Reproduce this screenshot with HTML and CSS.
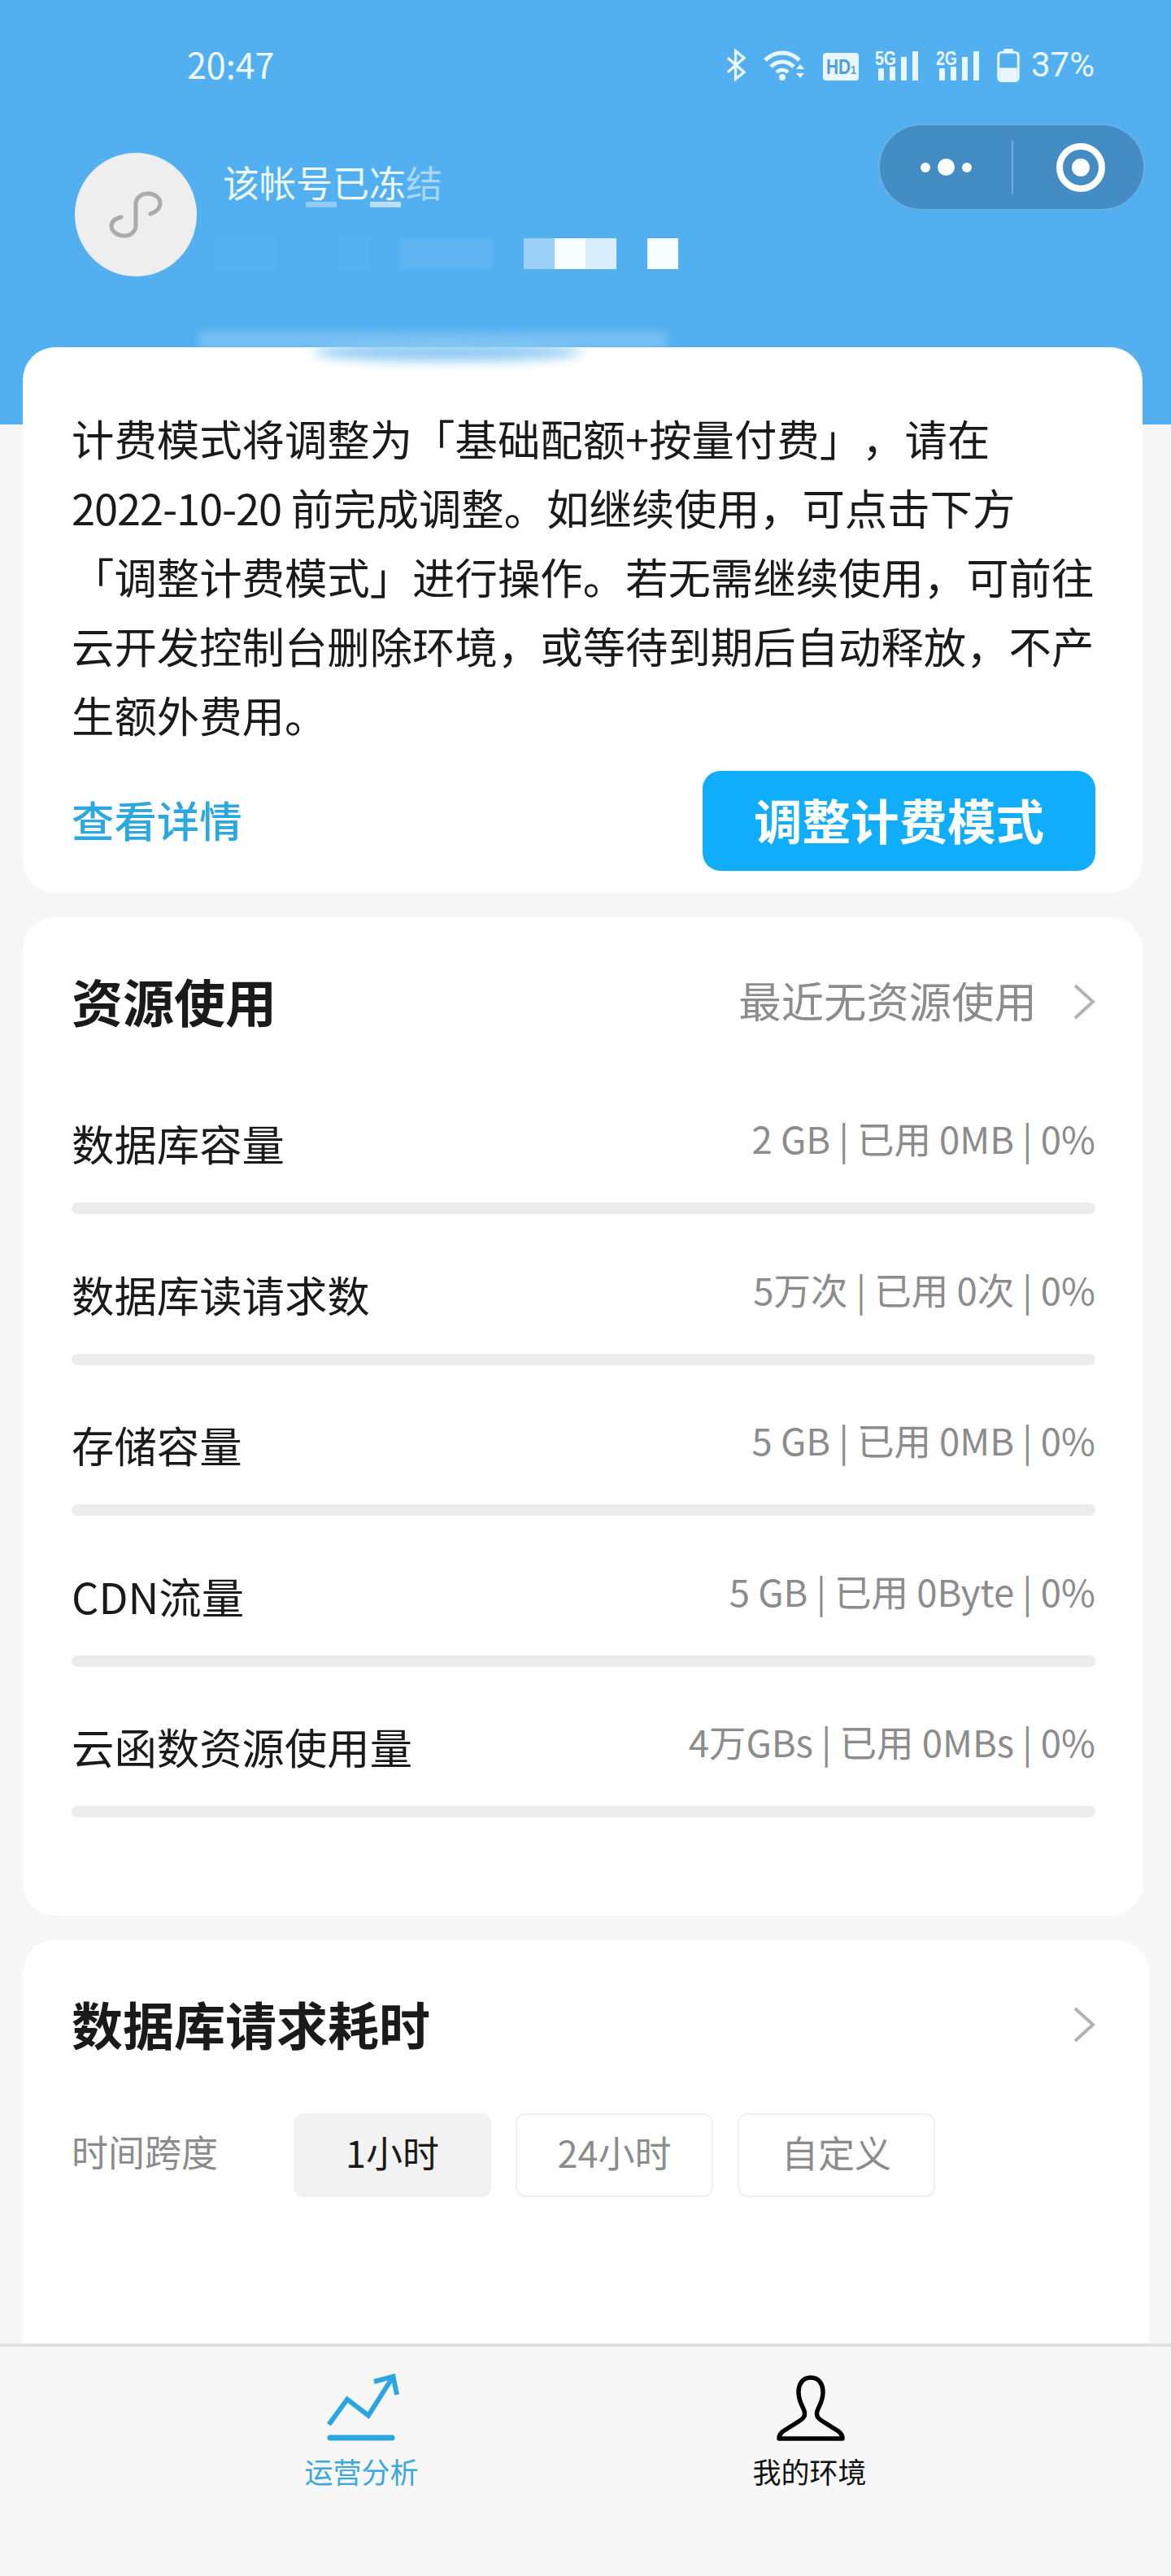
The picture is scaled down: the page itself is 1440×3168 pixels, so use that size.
FILE: index.html
```html
<!DOCTYPE html>
<html lang="zh-CN">
<head>
    <meta charset="UTF-8">
    <meta name="viewport" content="width=device-width, initial-scale=1.0">
    <title>运营分析</title>
    <link rel="stylesheet" href="styles.css">
</head>
<body>
    <div class="page">
        <header class="header">
            <div class="status-bar">
                <span class="status-time">20:47</span>
                <div class="status-icons">
                    <svg class="icon-bt" viewBox="0 0 26 40"><path d="M2 11 L23 29 L12 38 L12 2 L23 11 L2 29" fill="none" stroke="#eaf6fe" stroke-width="3.4"/></svg>
                    <svg class="icon-wifi" viewBox="0 0 54 40">
                        <path d="M3 14 C15 2 33 2 45 14" fill="none" stroke="#eaf6fe" stroke-width="5"/>
                        <path d="M10 22 C18 14 30 14 38 22" fill="none" stroke="#eaf6fe" stroke-width="5"/>
                        <path d="M17 29 C21 25 27 25 31 29" fill="none" stroke="#eaf6fe" stroke-width="4.5"/>
                        <circle cx="24" cy="35" r="4" fill="#eaf6fe"/>
                        <path d="M41 25 L46 19 L51 25 Z M41 30 L51 30 L46 36 Z" fill="#eaf6fe"/>
                    </svg>
                    <svg class="icon-hd" viewBox="0 0 44 34">
                        <rect y="0" width="44" height="34" rx="4" fill="#eaf6fe"/>
                        <text x="4" y="26" class="hd-text" textLength="37" lengthAdjust="spacingAndGlyphs">HD<tspan class="hd-sub">1</tspan></text>
                    </svg>
                    <svg class="icon-signal" viewBox="0 0 55 40">
                        <text x="0" y="20" class="net-text" textLength="26" lengthAdjust="spacingAndGlyphs">5G</text>
                        <rect x="4" y="24" width="7" height="15" rx="1" fill="#eaf6fe"/>
                        <rect x="18" y="22" width="7" height="17" rx="1" fill="#eaf6fe"/>
                        <rect x="32" y="10" width="7" height="29" fill="#eaf6fe"/>
                        <rect x="46" y="3" width="7" height="36" fill="#eaf6fe"/>
                    </svg>
                    <svg class="icon-signal" viewBox="0 0 55 40">
                        <text x="0" y="20" class="net-text" textLength="26" lengthAdjust="spacingAndGlyphs">2G</text>
                        <rect x="4" y="24" width="7" height="15" rx="1" fill="#eaf6fe"/>
                        <rect x="18" y="22" width="7" height="17" rx="1" fill="#eaf6fe"/>
                        <rect x="32" y="10" width="7" height="29" fill="#eaf6fe"/>
                        <rect x="46" y="3" width="7" height="36" fill="#eaf6fe"/>
                    </svg>
                    <svg class="icon-battery" viewBox="0 0 28 42">
                        <rect x="8" y="0" width="12" height="5" rx="1" fill="#eaf6fe"/>
                        <rect x="1.5" y="4.5" width="25" height="36" rx="4" fill="none" stroke="#eaf6fe" stroke-width="3"/>
                        <rect x="3" y="24" width="22" height="15" fill="#eaf6fe"/>
                    </svg>
                    <span class="status-pct">37%</span>
                </div>
            </div>

            <div class="profile">
                <div class="avatar">
                    <svg viewBox="0 0 72 60"><path d="M18 33 C10 35 6 39 6 44 C6 51 14 56 22 56 C30 56 36 50 36 43 L36 17 C36 9 43 4 51 4 C59 4 66 9 66 16 C66 22 61 27 54 29" fill="none" stroke="#ababab" stroke-width="5" stroke-linecap="round"/></svg>
                </div>
                <div class="profile-info">
                    <div class="profile-name">该帐号已冻<span class="fade">结</span><i class="patch patch-a"></i><i class="patch patch-b"></i></div>
                    <div class="mosaic">
                        <i class="m1"></i><i class="m1"></i><i class="m0"></i><i class="m0"></i><i class="m1"></i><i class="m0"></i><i class="m2"></i><i class="m2"></i><i class="m2"></i><i class="m0"></i>
                        <i class="m3"></i><i class="m4"></i><i class="m5"></i><i class="m0"></i><i class="m4"></i>
                    </div>
                </div>
                <div class="capsule">
                    <div class="capsule-dots"><i></i><b></b><i></i></div>
                    <div class="capsule-line"></div>
                    <div class="capsule-target"></div>
                </div>
            </div>
        </header>

        <div class="smudge"></div>
        <div class="smudge-dark"></div>

        <section class="card notice">
            <p class="notice-text">计费模式将调整为「基础配额+按量付费」，请在<br><span class="num">2022-10-20</span> 前完成调整。如继续使用，可点击下方<br>「调整计费模式」进行操作。若无需继续使用，可前往<br>云开发控制台删除环境，或等待到期后自动释放，不产<br>生额外费用。</p>
            <div class="notice-actions">
                <a class="notice-link">查看详情</a>
                <button class="notice-button">调整计费模式</button>
            </div>
        </section>

        <section class="card usage">
            <div class="card-head">
                <h2>资源使用</h2>
                <div class="head-right">
                    <span>最近无资源使用</span>
                    <svg class="chevron" viewBox="0 0 28 44"><path d="M3 2 L25 22 L3 42" fill="none" stroke="#b2b2b2" stroke-width="4"/></svg>
                </div>
            </div>
            <div class="usage-list">
                <div class="usage-row">
                    <div class="usage-info"><span class="usage-name">数据库容量</span><span class="usage-value">2 GB | 已用 0MB | 0%</span></div>
                    <div class="track"></div>
                </div>
                <div class="usage-row">
                    <div class="usage-info"><span class="usage-name">数据库读请求数</span><span class="usage-value">5万次 | 已用 0次 | 0%</span></div>
                    <div class="track"></div>
                </div>
                <div class="usage-row">
                    <div class="usage-info"><span class="usage-name">存储容量</span><span class="usage-value">5 GB | 已用 0MB | 0%</span></div>
                    <div class="track"></div>
                </div>
                <div class="usage-row">
                    <div class="usage-info"><span class="usage-name">CDN流量</span><span class="usage-value">5 GB | 已用 0Byte | 0%</span></div>
                    <div class="track"></div>
                </div>
                <div class="usage-row">
                    <div class="usage-info"><span class="usage-name">云函数资源使用量</span><span class="usage-value">4万GBs | 已用 0MBs | 0%</span></div>
                    <div class="track"></div>
                </div>
            </div>
        </section>

        <section class="card latency">
            <div class="card-head">
                <h2>数据库请求耗时</h2>
                <svg class="chevron" viewBox="0 0 28 44"><path d="M3 2 L25 22 L3 42" fill="none" stroke="#b2b2b2" stroke-width="4"/></svg>
            </div>
            <div class="range">
                <span class="range-label">时间跨度</span>
                <span class="chip chip-active">1小时</span>
                <span class="chip">24小时</span>
                <span class="chip">自定义</span>
            </div>
        </section>

        <nav class="tabbar">
            <div class="tab tab-active">
                <svg viewBox="0 0 92 88">
                    <path d="M5.4 63.7 L28 32.7 L54 52.7 L83 7" fill="none" stroke="#2ba6df" stroke-width="6"/>
                    <path d="M61 11 L84.5 4.7 L89 27" fill="none" stroke="#2ba6df" stroke-width="6"/>
                    <path d="M7 80 L83 80" fill="none" stroke="#2ba6df" stroke-width="7" stroke-linecap="round"/>
                </svg>
                <span>运营分析</span>
            </div>
            <div class="tab">
                <svg viewBox="0 0 92 88">
                    <path d="M47 6 C37 6 32 14 32 24 C32 35 37 41 39 47 C41 54 37 57 32 60 L13 72 C9 75 8 77 8 81 L86 81 C86 77 85 75 81 72 L62 60 C57 57 53 54 55 47 C57 41 62 35 62 24 C62 14 57 6 47 6 Z" fill="none" stroke="#000" stroke-width="5.5" stroke-linejoin="round"/>
                </svg>
                <span>我的环境</span>
            </div>
        </nav>
    </div>
</body>
</html>
```

FILE: styles.css
```css
* {
    box-sizing: border-box;
}

body {
    margin: 0;
    font-family: "Noto Sans CJK SC", "Noto Sans", sans-serif;
    color: #1a1a1a;
    text-spacing-trim: space-all;
}

.page {
    position: relative;
    width: 1440px;
    height: 3168px;
    overflow: hidden;
    background-color: #f7f7f7;
}

/* 顶部 */
.header {
    height: 522px;
    background-color: #53b0f0;
    color: #fff;
}

.status-bar {
    display: flex;
    align-items: center;
    height: 56px;
    padding: 52px 94px 0 230px;
    box-sizing: content-box;
}

.status-time {
    margin-bottom: 4px;
    font-size: 43px;
    line-height: 56px;
    color: #f2faff;
}

.status-icons {
    display: flex;
    align-items: center;
    gap: 20px;
    margin-left: auto;
    color: #eaf6fe;
}

.status-icons svg {
    overflow: visible;
}

.icon-bt {
    width: 25px;
    height: 40px;
}

.icon-wifi {
    width: 54px;
    height: 40px;
}

.icon-hd {
    width: 44px;
    height: 34px;
    margin-top: 3px;
}

.icon-signal {
    width: 55px;
    height: 40px;
}

.icon-battery {
    width: 28px;
    height: 41px;
}

.hd-text {
    font-family: "Liberation Sans", sans-serif;
    font-size: 25px;
    font-weight: bold;
    fill: #4f9fd8;
}

.hd-sub {
    font-size: 15px;
}

.net-text {
    font-family: "Liberation Sans", sans-serif;
    font-size: 24px;
    font-weight: bold;
    fill: #eaf6fe;
}

.status-pct {
    margin-left: -6px;
    font-family: Roboto, sans-serif;
    font-size: 42px;
    line-height: 56px;
}

.profile {
    display: flex;
    align-items: flex-start;
    padding: 44px 32px 0 92px;
}

.avatar {
    display: flex;
    align-items: center;
    justify-content: center;
    width: 150px;
    height: 152px;
    margin-top: 36px;
    border-radius: 50%;
    background-color: #eee;
}

.avatar svg {
    width: 72px;
    height: 60px;
}

.profile-info {
    margin: 44px 0 0 32px;
}

.profile-name {
    position: relative;
    font-size: 45px;
    line-height: 56px;
    color: #eef9ff;
}

.profile-name .fade {
    opacity: 0.55;
}

.patch {
    position: absolute;
    top: 52px;
    width: 38px;
    height: 7px;
}

.patch-a {
    left: 102px;
    background-color: rgba(255, 255, 255, 0.35);
}

.patch-b {
    left: 181px;
    background-color: rgba(255, 255, 255, 0.6);
}

.mosaic {
    display: flex;
    height: 38px;
    margin: 41px 0 0 -10px;
}

.mosaic i {
    width: 38px;
    height: 38px;
}

.mosaic .m0 {
    background-color: transparent;
}

.mosaic .m1 {
    background-color: rgba(255, 255, 255, 0.02);
}

.mosaic .m2 {
    background-color: rgba(255, 255, 255, 0.06);
}

.mosaic .m3 {
    background-color: rgba(255, 255, 255, 0.42);
}

.mosaic .m4 {
    background-color: #f6fdff;
}

.mosaic .m5 {
    background-color: rgba(255, 255, 255, 0.78);
}

.capsule {
    display: flex;
    align-items: center;
    width: 328px;
    height: 107px;
    margin-left: auto;
    border: 2px solid #66aee4;
    border-radius: 54px;
    background-color: #448dc4;
}

.capsule-dots {
    display: flex;
    align-items: center;
    justify-content: center;
    gap: 9px;
    width: 162px;
}

.capsule-dots i {
    width: 12px;
    height: 12px;
    border-radius: 50%;
    background-color: #fff;
}

.capsule-dots b {
    width: 21px;
    height: 21px;
    border-radius: 50%;
    background-color: #fff;
}

.capsule-line {
    width: 2px;
    height: 66px;
    background-color: #6fabd8;
}

.capsule-target {
    position: relative;
    width: 60px;
    height: 60px;
    margin-left: 53px;
    border: 8px solid #fff;
    border-radius: 50%;
}

.capsule-target::after {
    content: "";
    position: absolute;
    top: 11px;
    left: 11px;
    width: 22px;
    height: 22px;
    border-radius: 50%;
    background-color: #fff;
}

/* 打码留下的痕迹 */
.smudge {
    position: absolute;
    top: 408px;
    left: 245px;
    width: 575px;
    height: 20px;
    background-color: rgba(255, 255, 255, 0.2);
    filter: blur(4px);
}

.smudge-dark {
    position: absolute;
    z-index: 2;
    top: 422px;
    left: 385px;
    width: 330px;
    height: 22px;
    border-radius: 50%;
    background-color: #8ccaf4;
    filter: blur(7px);
}

/* 卡片 */
.card {
    margin: 0 35px 30px 28px;
    border-radius: 40px;
    background-color: #fff;
}

.notice {
    position: relative;
    height: 671px;
    margin-top: -95px;
    padding: 69px 58px 27px 60px;
}

.notice-text {
    margin: 0;
    font-size: 52.4px;
    line-height: 85px;
    white-space: nowrap;
}

.notice-text .num {
    letter-spacing: -1.1px;
}

.notice-actions {
    display: flex;
    align-items: center;
    justify-content: space-between;
    margin-top: 27px;
}

.notice-link {
    margin-bottom: 6px;
    font-size: 52.4px;
    font-weight: 500;
    color: #2ba8e0;
}

.notice-button {
    width: 483px;
    height: 123px;
    padding: 0 0 6px;
    border: none;
    border-radius: 22px;
    font-family: inherit;
    font-size: 59.5px;
    font-weight: 700;
    color: #fff;
    background-color: #11adfd;
}

.usage {
    height: 1228px;
    padding: 67px 58px 0 60px;
}

.card-head {
    display: flex;
    align-items: center;
    justify-content: space-between;
    height: 80px;
    padding-bottom: 12px;
}

.card-head h2 {
    margin: 0;
    font-size: 63px;
    font-weight: 700;
    color: #1a1a1a;
}

.head-right {
    display: flex;
    align-items: center;
    gap: 44px;
    font-size: 52.4px;
    color: #8c8c8c;
}

.chevron {
    width: 28px;
    height: 44px;
    margin-top: 5px;
}

.usage-list {
    display: flex;
    flex-direction: column;
    gap: 68.5px;
    margin-top: 101px;
}

.usage-info {
    display: flex;
    align-items: flex-start;
    justify-content: space-between;
    height: 70px;
    line-height: 70px;
}

.usage-name {
    margin-top: -6px;
    font-size: 52.4px;
}

.usage-value {
    margin-top: -12px;
    font-size: 45.5px;
    color: #8c8c8c;
}

.track {
    height: 14px;
    margin-top: 33px;
    border-radius: 7px;
    background-color: #ececec;
}

.latency {
    height: 620px;
    margin-right: 27px;
    padding: 67px 66px 0 60px;
}

.range {
    display: flex;
    align-items: center;
    gap: 30px;
    margin-top: 66px;
}

.range-label {
    width: 243px;
    margin-bottom: 10px;
    font-size: 45px;
    color: #8c8c8c;
}

.chip {
    display: flex;
    align-items: center;
    justify-content: center;
    width: 243px;
    height: 103px;
    padding-bottom: 8px;
    border: 2px solid #f0f0f0;
    border-radius: 12px;
    font-size: 45px;
    color: #8c8c8c;
}

.chip-active {
    border-color: #f2f2f2;
    color: #1a1a1a;
    background-color: #f2f2f2;
}

/* 底部导航 */
.tabbar {
    position: absolute;
    left: 0;
    right: 0;
    bottom: 0;
    display: flex;
    justify-content: center;
    height: 286px;
    padding-top: 32px;
    border-top: 4px solid #e0e0e0;
    background-color: #f7f7f7;
}

.tab {
    display: flex;
    flex-direction: column;
    align-items: center;
    width: 551px;
    font-size: 35px;
    line-height: 50px;
    color: #111;
}

.tab svg {
    width: 92px;
    height: 88px;
    margin-bottom: 8px;
}

.tab-active {
    color: #3ba8dc;
}
```
